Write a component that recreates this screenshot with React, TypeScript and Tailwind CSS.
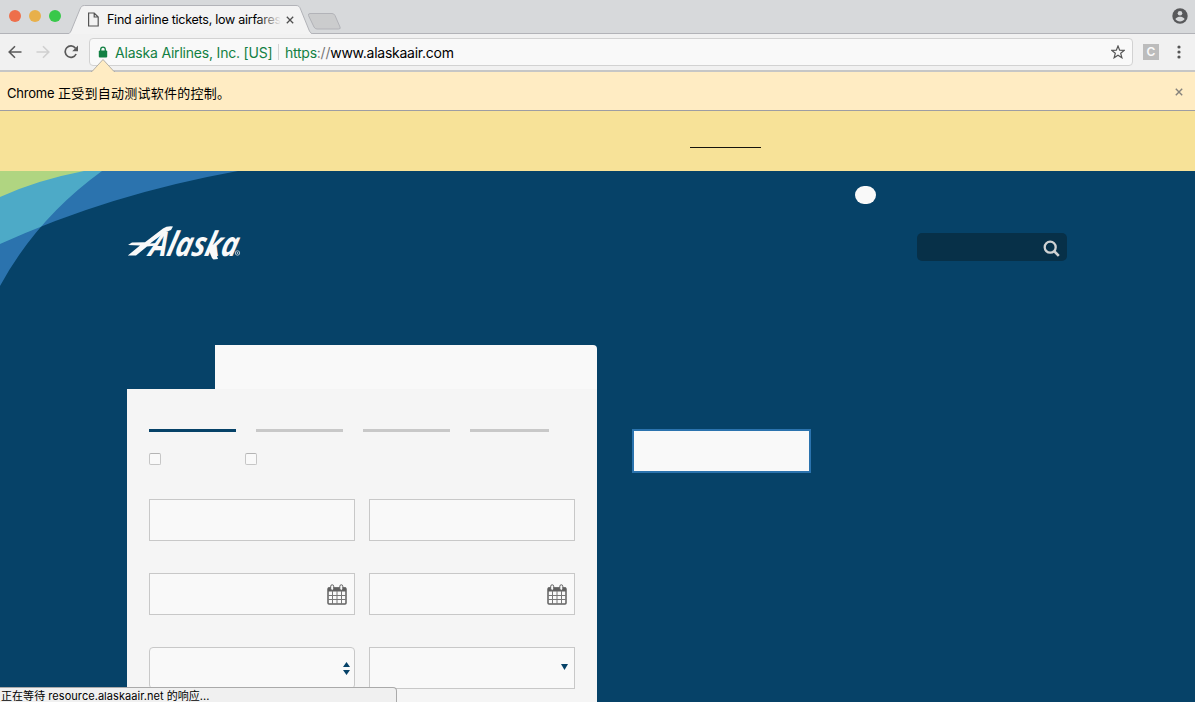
import React from 'react';

const uiFont = "font-['Inter','Noto_Sans_CJK_SC',sans-serif]";

function TabStrip() {
  return (
    <div className="relative flex h-[34px] shrink-0 items-start bg-[#d7d9db]">
      <svg className="absolute inset-0" width="1195" height="34" viewBox="0 0 1195 34">
        <path d="M0 33.5H1195" stroke="#b2b3b8" />
        <path d="M66 34.5C69 34 70 33 71 31L80 9C81.200 6.500 82 5.500 84.500 5.500H296C298.500 5.500 299.500 6.500 300.500 9L309 30C310 32.500 311 33.500 314 34.500" fill="#f3f3f3" stroke="#b2b3b8" />
        <path d="M310 13.500H332Q334 13.500 335 15.500L340 27Q341 29 338.500 29H317Q315 29 314 27L308.500 15.500Q308 13.500 310 13.500Z" fill="#cbcccd" stroke="#b2b3b8" />
      </svg>
      <div className="relative ml-[9px] mt-[10px] flex gap-2">
        <span className="size-3 rounded-full bg-[#ee6f4b]" />
        <span className="size-3 rounded-full bg-[#e8b04b]" />
        <span className="size-3 rounded-full bg-[#38c84a]" />
      </div>
      <svg className="relative ml-[27px] mt-[12px]" width="11" height="15" viewBox="0 0 11 15" fill="none" stroke="#555" strokeWidth="1.200">
        <path d="M.6 1H6.200L10.200 5V14H.6ZM6.200 1V5H10.200" />
      </svg>
      <div className="relative ml-[8px] mt-[11px] w-[174px] overflow-hidden whitespace-nowrap text-[12.500px] leading-[18px] tracking-[-0.260px] text-black">
        Find airline tickets, low airfares
        <div className="absolute inset-y-0 right-0 w-6 bg-linear-to-r from-transparent to-[#f3f3f3]" />
      </div>
      <svg className="relative ml-[5px] mt-[16px]" width="8" height="8" viewBox="0 0 8 8" stroke="#505050" strokeWidth="1.300">
        <path d="M.8.8 7.200 7.200M7.200.8.8 7.200" />
      </svg>
      <svg className="relative ml-auto mr-[7px] mt-[8px]" width="16" height="16" viewBox="0 0 16 16">
        <circle cx="8" cy="8" r="7.700" fill="#58595b" />
        <circle cx="8" cy="5.200" r="2.300" fill="#d7d9db" />
        <path d="M3.300 11C4.500 9.200 6.500 8.700 8 8.700S11.500 9.200 12.700 11C11.500 12.600 10 13.400 8 13.400S4.500 12.600 3.300 11Z" fill="#d7d9db" />
      </svg>
    </div>
  );
}

function Toolbar() {
  return (
    <div className="flex h-[38px] shrink-0 items-start border-b-2 border-[#c6c6c6] bg-[#f1f1f1] pt-1">
      <svg className="ml-[8px] mt-[7px]" width="14" height="14" viewBox="0 0 14 14" fill="none" stroke="#5a5a5a" strokeWidth="1.600">
        <path d="M13.500 7H1.500M7 1.200 1.200 7 7 12.800" />
      </svg>
      <svg className="ml-[14px] mt-[7px]" width="14" height="14" viewBox="0 0 14 14" fill="none" stroke="#d0d0d0" strokeWidth="1.600">
        <path d="M.5 7H12.500M7 1.200 12.800 7 7 12.800" />
      </svg>
      <svg className="ml-[14px] mt-[7px]" width="15" height="14" viewBox="0 0 15 14">
        <path d="M12.100 9A5.700 5.700 0 1 1 11.400 3.100" fill="none" stroke="#5a5a5a" strokeWidth="1.700" />
        <path d="M14 .4V6.200H8.200Z" fill="#5a5a5a" />
      </svg>
      <div className="ml-[10px] flex h-[28px] w-[1044px] items-center rounded-[4px] border border-[#d2d2d2] bg-[#f9f9f9] text-[14px] leading-none">
        <svg className="ml-[8px]" width="10" height="12" viewBox="0 0 10 12">
          <rect x=".8" y="4.500" width="8.400" height="7" rx="1" fill="#128043" />
          <path d="M2.700 5V3.400A2.300 2.300 0 0 1 7.300 3.400V5" fill="none" stroke="#128043" strokeWidth="1.300" />
        </svg>
        <span className="ml-[7px] mt-px w-[157px] whitespace-nowrap tracking-[-0.200px] text-[#128043]">Alaska Airlines, Inc. [US]</span>
        <span className="ml-[6px] h-[16px] w-px bg-[#d4d4d4]" />
        <span className="ml-[6px] mt-px whitespace-nowrap tracking-[-0.250px] text-black">
          <span className="text-[#128043]">https</span>
          <span className="text-[#777]">://</span>www.alaskaair.com
        </span>
        <svg className="ml-auto mr-[7px]" width="14" height="14" viewBox="0 0 14 14" fill="none" stroke="#555" strokeWidth="1.200">
          <path d="M7 1 8.650 5.100 13.200 5.400 9.700 8.300 10.900 12.800 7 10.300 3.100 12.800 4.300 8.300.8 5.400 5.350 5.100Z" />
        </svg>
      </div>
      <div className="ml-[10px] mt-[6px] flex size-4 items-center justify-center bg-[#bcbcbc] text-[12px] font-semibold text-[#f9f9f9]">C</div>
      <svg className="ml-[18px] mt-[7px]" width="4" height="14" viewBox="0 0 4 14" fill="#555">
        <circle cx="2" cy="2" r="1.600" />
        <circle cx="2" cy="7" r="1.600" />
        <circle cx="2" cy="12" r="1.600" />
      </svg>
    </div>
  );
}

function InfoBar() {
  return (
    <div className="relative flex h-[39px] shrink-0 items-center border-b border-[#9d9da3] bg-[#ffecc3] pl-[7px] pr-[12px] text-[13px] text-black">
      <svg className="absolute left-[91px] top-[-14px]" width="24" height="15" viewBox="0 0 24 15">
        <path d="M1 13.500 12 1.500 23 13.500V15H1Z" fill="#ffecc3" />
        <path d="M0 13.500H1L12 1.500 23 13.500H24" fill="none" stroke="#b4b0a8" />
      </svg>
      <span className="mt-[6px] whitespace-nowrap tracking-[-0.200px]">
        Chrome <span className="tracking-[0.250px]">正受到自动测试软件的控制。</span>
      </span>
      <svg className="ml-auto mt-[1px]" width="8" height="8" viewBox="0 0 8 8" stroke="#85827c" strokeWidth="1.400">
        <path d="M.8.8 7.200 7.200M7.200.8.8 7.200" />
      </svg>
    </div>
  );
}

function Swoosh() {
  return (
    <svg className="absolute left-0 top-0" width="240" height="118" viewBox="0 0 240 118">
      <defs>
        <clipPath id="steep">
          <path d="M0 0H102Q37 47 0 115Z" />
        </clipPath>
      </defs>
      <path d="M0 0H102Q37 47 0 115Z" fill="#2b73ae" />
      <path d="M0 0H238Q110 23 0 73Z" fill="#2b73ae" />
      <g clipPath="url(#steep)">
        <path d="M0 0H238Q110 23 0 73Z" fill="#4daac7" />
        <path d="M0 0H84Q37 9 0 26Z" fill="#b0d581" />
      </g>
    </svg>
  );
}

function Logo() {
  return (
    <svg className="overflow-visible" width="115" height="36" viewBox="0 0 115 36" fill="#f9f9f9">
      <path d="M1 20 5 17.500 18 17.200 36 3.500Q40 .8 46 1.500L44 5 38 7.500 23 18.500 31 18 30 20.500 20 21.500 9 30.500H.8L13 20.400Z" />
      <text transform="translate(21 30.500) skewX(-14)" fontFamily="'Open Sans',sans-serif" fontWeight="700" fontStyle="italic" fontSize="34" textLength="88" lengthAdjust="spacingAndGlyphs">Alaska</text>
      <path d="M82 24 87 22.500 91 34 86.500 34.500Q84 33 82 24Z" />
      <circle cx="110.500" cy="28" r="2.200" fill="none" stroke="#d5dce0" strokeWidth=".8" />
      <circle cx="110.500" cy="28" r=".8" />
    </svg>
  );
}

function CalendarIcon() {
  return (
    <svg width="20" height="21" viewBox="0 0 20 21">
      <rect x="1" y="4" width="18" height="16" rx="1" fill="#f9f9f9" stroke="#606060" strokeWidth="1.500" />
      <path d="M1 3.500H19V7.500H1Z" fill="#606060" />
      <path d="M1 11.500H19M1 15.500H19M5.500 7V20M10 7V20M14.500 7V20" stroke="#777" />
      <rect x="3.700" y=".8" width="3" height="5.500" rx="1.500" fill="#f9f9f9" stroke="#606060" />
      <rect x="12.800" y=".8" width="3" height="5.500" rx="1.500" fill="#f9f9f9" stroke="#606060" />
    </svg>
  );
}

function Field({ className = '', children }: { className?: string; children?: React.ReactNode }) {
  return (
    <div className={'flex h-[42px] items-center justify-end border border-[#c8c8c8] bg-[#f9f9f9] ' + className}>
      {children}
    </div>
  );
}

function BookingPanel() {
  return (
    <div className="w-[470px]">
      <div className="flex h-[44px]">
        <div className="w-[88px]" />
        <div className="flex-1 rounded-tr-[4px] bg-[#f9f9f9]" />
      </div>
      <div className="h-[320px] bg-[#f5f5f5] px-[22px] pt-[40px]">
        <div className="flex h-[3px] gap-[20px]">
          <span className="w-[87px] bg-[#064268]" />
          <span className="w-[87px] bg-[#c8c8c8]" />
          <span className="w-[87px] bg-[#c8c8c8]" />
          <span className="w-[79px] bg-[#c8c8c8]" />
        </div>
        <div className="mt-[21px] flex gap-[84px]">
          <span className="size-[12px] rounded-[2px] border border-[#c6c6c6] border-t-[#b4b4b4] bg-[#f9f9f9]" />
          <span className="size-[12px] rounded-[2px] border border-[#c6c6c6] border-t-[#b4b4b4] bg-[#f9f9f9]" />
        </div>
        <div className="mt-[34px] grid grid-cols-2 gap-x-[14px] gap-y-[32px]">
          <Field />
          <Field />
          <Field className="pr-[7px]"><CalendarIcon /></Field>
          <Field className="pr-[7px]"><CalendarIcon /></Field>
          <Field className="rounded-[4px] pr-[4px]">
            <svg width="7" height="13" viewBox="0 0 7 13" fill="#064268">
              <path d="M0 5 3.500 0 7 5ZM0 8H7L3.500 13Z" />
            </svg>
          </Field>
          <Field className="pr-[6px]">
            <svg className="mb-[3px]" width="7" height="6" viewBox="0 0 7 6" fill="#064268">
              <path d="M0 0H7L3.500 6Z" />
            </svg>
          </Field>
        </div>
      </div>
    </div>
  );
}

export default function App() {
  return (
    <div className={'relative flex h-[702px] w-[1195px] flex-col overflow-hidden ' + uiFont}>
      <TabStrip />
      <Toolbar />
      <InfoBar />
      <div className="h-[60px] shrink-0 bg-[#f7e298] pl-[690px] pt-[36px]">
        <div className="h-px w-[71px] bg-[#15130d]" />
      </div>
      <main className="relative flex-1 bg-[#064268]">
        <Swoosh />
        <div className="relative flex flex-col">
          <div className="ml-[855px] mt-[15px] h-[18px] w-[21px] rounded-[9px] bg-[#f9f9f9]" />
          <header className="mt-[21px] flex h-[36px] items-end justify-between pl-[127px] pr-[128px]">
            <Logo />
            <div className="flex h-[28px] w-[150px] items-center justify-end rounded-[5px] bg-[#073048] pr-[7px]">
              <svg className="mt-[3px]" width="17" height="17" viewBox="0 0 17 17" fill="none" stroke="#d0d2d3">
                <circle cx="7.200" cy="7.200" r="5.500" strokeWidth="2.300" />
                <path d="M11 11 15.800 15.800" strokeWidth="2.600" />
              </svg>
            </div>
          </header>
          <div className="mt-[84px] flex items-start gap-[35px] pl-[127px]">
            <BookingPanel />
            <div className="mt-[84px] h-[44px] w-[179px] border-2 border-[#2b73ae] bg-[#f9f9f9]" />
          </div>
        </div>
      </main>
      <div className="absolute bottom-0 left-0 flex h-[15px] w-[397px] items-center whitespace-nowrap rounded-tr-[4px] border-r border-t border-[#aaa] bg-[#f0f0f0] pl-px pt-[3px] text-[11px] leading-none tracking-[0.050px] text-black">
        正在等待 resource.alaskaair.net 的响应...
      </div>
    </div>
  );
}
